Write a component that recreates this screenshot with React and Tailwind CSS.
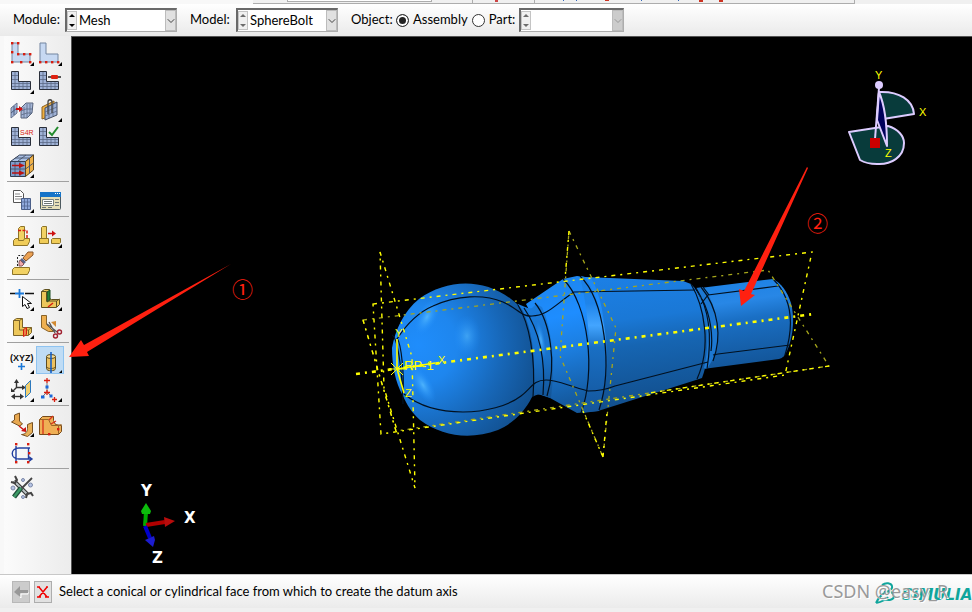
import { useState } from 'react';
import { ChevronDown } from 'lucide-react';

const TOOL_GROUPS = [
  [
    { label: 'Seed part', icon: SeedPartIcon, more: true },
    { label: 'Seed edges', icon: SeedEdgesIcon, more: true },
    { label: 'Mesh part', icon: MeshL, more: true },
    { label: 'Edit mesh', icon: EditMeshIcon },
    { label: 'Copy mesh pattern', icon: CopyMeshIcon },
    { label: 'Associate mesh', icon: AssociateIcon, more: true },
    { label: 'Element type', icon: ElementTypeIcon },
    { label: 'Verify mesh', icon: VerifyIcon },
    { label: 'Stack direction', icon: StackIcon, more: true },
  ],
  [
    { label: 'Mesh part copy', icon: PartCopyIcon, more: true },
    { label: 'Mesh manager', icon: ManagerIcon },
  ],
  [
    { label: 'Offset faces', icon: OffsetIcon, more: true },
    { label: 'Replace faces', icon: ReplaceIcon, more: true },
    { label: 'Remove faces', icon: EraseIcon },
  ],
  [
    { label: 'Partition edge', icon: PartitionEdgeIcon, more: true },
    { label: 'Partition face', icon: PartitionFaceIcon, more: true },
    { label: 'Partition cell', icon: PartitionCellIcon, more: true },
    { label: 'Cut geometry', icon: CutIcon },
  ],
  [
    { label: 'Datum point', icon: DatumPointIcon, more: true },
    { label: 'Datum axis', icon: DatumAxisIcon, more: true },
    { label: 'Datum plane', icon: DatumPlaneIcon, more: true },
    { label: 'Datum coordinates', icon: DatumCsysIcon, more: true },
  ],
  [
    { label: 'Virtual topology', icon: TopologyIcon, more: true },
    { label: 'Combine faces', icon: CombineIcon },
    { label: 'Restore entities', icon: RestoreIcon },
  ],
  [{ label: 'Tools', icon: ToolsIcon }],
];

export default function App() {
  const [active, setActive] = useState('Datum axis');

  return (
    <div className="flex h-screen flex-col overflow-hidden bg-[#f0f0f0] font-['Lato','Noto_Sans_CJK_SC',sans-serif] text-[13px] text-black">
      <TopStrip />
      <ContextBar />
      <main className="flex min-h-0 flex-1">
        <Toolbox active={active} onPick={setActive} />
        <section className="min-w-0 flex-1 border-t border-l border-[#555] bg-black">
          <Viewport />
        </section>
      </main>
      <PromptBar />
    </div>
  );
}

function TopStrip() {
  return (
    <div className="flex h-1 shrink-0 bg-[#f0f0f0]">
      <div className="w-[253px] bg-[#f8f8f8]" />
      <div className="flex w-[602px] border-r border-b border-[#adadad]">
        <div className="ml-[34px] h-[2px] w-[145px] border-x border-b border-[#adadad] bg-white" />
        <div className="ml-10 w-px bg-[#adadad]" />
        <div className="ml-[22px] h-[2px] w-[3px] bg-[#cc4444]" />
        <div className="ml-9 w-px bg-[#adadad]" />
        <div className="ml-7 h-px w-px bg-[#3366bb]" />
        <div className="ml-3 h-px w-px bg-[#3366bb]" />
        <div className="ml-7 h-px w-1 bg-[#cc3322]" />
        <div className="ml-8 h-px w-px bg-[#3366bb]" />
        <div className="ml-9 h-px w-px bg-[#3366bb]" />
        <div className="ml-5 h-[2px] w-1 bg-[#cc3322]" />
        <div className="ml-4 h-[2px] w-1 bg-[#cc3322]" />
      </div>
    </div>
  );
}

function ContextBar() {
  const [scope, setScope] = useState('assembly');
  return (
    <header className="flex h-8 shrink-0 items-center bg-linear-to-b from-white to-[#eaeaea] pl-[13px]">
      <label htmlFor="module" className="w-[52px]">Module:</label>
      <Combo id="module" options={['Mesh']} width="w-28" />
      <label htmlFor="model" className="ml-[13px] w-[46px]">Model:</label>
      <Combo id="model" options={['SphereBolt']} width="w-[102px]" dimSpin />
      <fieldset className="ml-[13px] flex items-center">
        <legend className="float-left w-[45px]">Object:</legend>
        <Radio id="assembly" label="Assembly" checked={scope === 'assembly'} onChange={setScope} />
        <Radio id="part" label="Part:" checked={scope === 'part'} onChange={setScope} />
      </fieldset>
      <div>
        <Combo id="part-name" label="Part name" options={['']} width="w-[105px]" dimSpin disabled />
      </div>
    </header>
  );
}

function Combo({ id, label, options, width, dimSpin, disabled }) {
  return (
    <div className={`${width} flex h-6 border border-t-2 border-l-2 border-[#adadad] border-t-[#696969] border-l-[#696969] bg-white`}>
      <div className={`${dimSpin ? 'text-[#6d6d6d]' : 'text-black'} my-px flex w-[10px] shrink-0 flex-col border border-[#c4c4c4] bg-[#f0f0f0]`}>
        <Spin d="M1 5h6L4 2z" name="Previous" disabled={disabled} />
        <Spin d="M1 3h6L4 6z" name="Next" disabled={disabled} />
      </div>
      <div className="relative min-w-0 flex-1">
        <select id={id} aria-label={label} disabled={disabled} className="h-full w-full appearance-none bg-transparent pl-[2px] outline-none">
          {options.map((o) => (
            <option key={o}>{o}</option>
          ))}
        </select>
        <span
          className={`${disabled ? 'bg-[#cccccc] text-[#9a9a9a]' : 'bg-[#e1e1e1] text-[#444]'} pointer-events-none absolute inset-y-0 right-0 flex w-[11px] items-center justify-center border border-[#bcbcbc]`}
        >
          <ChevronDown size={12} strokeWidth={2} className="shrink-0" />
        </span>
      </div>
    </div>
  );
}

function Spin({ d, name, disabled }) {
  return (
    <button aria-label={name} disabled={disabled} className="flex flex-1 items-center justify-center">
      <svg width="8" height="8" viewBox="0 0 8 8" className="shrink-0">
        <path d={d} fill="currentColor" />
      </svg>
    </button>
  );
}

function Radio({ id, label, checked, onChange }) {
  return (
    <div className="flex items-center">
      <input
        type="radio"
        name="scope"
        id={id}
        checked={checked}
        onChange={() => onChange(id)}
        className="size-[13px] appearance-none rounded-full border border-[#333] bg-white checked:bg-[#222] checked:shadow-[inset_0_0_0_2px_white]"
      />
      <label htmlFor={id} className="mr-1 ml-1">{label}</label>
    </div>
  );
}

function Toolbox({ active, onPick }) {
  return (
    <nav className="w-[71px] shrink-0 border-l-4 border-[#f8f8f8] bg-linear-to-r from-[#fbfbfb] to-[#ececec] pt-[2px] pr-[2px] pl-[3px]">
      {TOOL_GROUPS.map((tools, i) => (
        <div key={i} className="border-b border-[#a0a0a0] py-[3px] pl-px first:pt-0 last:border-b-0">
          <div className="flex flex-wrap">
            {tools.map(({ label, icon: Icon, more }) => (
              <button
                key={label}
                aria-label={label}
                onClick={() => onPick(label)}
                className={`size-7 ${active === label ? 'bg-[#bfdcf5] outline outline-offset-[-1px] outline-[#8ec3f0]' : ''}`}
              >
                <svg width="28" height="28" viewBox="0 0 28 28">
                  <Icon />
                  {more && <path d="M26 24v4h-4z" fill="#000" />}
                </svg>
              </button>
            ))}
          </div>
        </div>
      ))}
    </nav>
  );
}

function PromptBar() {
  return (
    <footer className="mb-1 flex h-[34px] shrink-0 items-center border-t border-[#c8c8c8] bg-linear-to-b from-white to-[#ebebeb] pl-3">
      <button aria-label="Go back" className="flex h-[22px] w-[18px] items-center justify-center border border-[#b8b8b8] bg-[#cccccc]">
        <svg width="16" height="16" viewBox="0 0 16 16">
          <path d="M3 9l5 5v-4h7V8" fill="none" stroke="#fff" />
          <path d="M1 8l6-6v4h8v3H7v4z" fill="#989898" />
        </svg>
      </button>
      <button aria-label="Cancel" className="ml-1 flex h-[22px] w-[18px] items-center justify-center border border-[#adadad] bg-[#e1e1e1]">
        <svg width="14" height="14" viewBox="0 0 14 14" className="shrink-0">
          <path d="M3 2l8 10M11 2L3 12M1 12h4M9 12h4M1 2h3M10 2h2" fill="none" stroke="#f00000" strokeWidth="1.5" />
        </svg>
      </button>
      <p className="ml-[7px] whitespace-nowrap">Select a conical or cylindrical face from which to create the datum axis</p>
      <div className="relative ml-auto flex h-full w-[150px] shrink-0 items-center overflow-hidden">
        <span className="absolute top-[5px] left-[52px] flex items-center text-[#10a59c]">
          <svg width="24" height="24" viewBox="0 0 24 24" fill="none" stroke="currentColor" strokeWidth="2" className="shrink-0">
            <path d="M8 4c4-3 9-2 10 1s-3 5-6 6M10 11c5-1 10 0 10 4s-6 5-9 3M2 22c3-6 6-9 10-11M2 22c5-1 9-2 12-6" />
          </svg>
          <b className="mt-1 ml-1 font-['DejaVu_Sans',sans-serif] text-[15px] whitespace-nowrap italic">SIMULIA</b>
        </span>
        <span className="relative font-['Noto_Sans',sans-serif] text-[18px] whitespace-nowrap text-[#999999] [text-shadow:1px_1px_0_white]">
          CSDN @easy_R
        </span>
      </div>
    </footer>
  );
}

function Viewport() {
  return (
    <svg viewBox="72 37 900 537" className="pointer-events-none block h-full w-full overflow-visible" role="img" aria-label="Sphere bolt assembly">
      <defs>
        <radialGradient id="ball" gradientUnits="userSpaceOnUse" cx="418" cy="345" r="130">
          <stop offset="0" stopColor="#1f8dfc" />
          <stop offset=".3" stopColor="#1e86ee" />
          <stop offset=".65" stopColor="#1767b8" />
          <stop offset="1" stopColor="#114c88" />
        </radialGradient>
        <linearGradient id="cone" x1="0" y1="0" x2=".15" y2="1">
          <stop offset="0" stopColor="#1e84ea" />
          <stop offset=".35" stopColor="#1e8dff" />
          <stop offset=".6" stopColor="#1c7edf" />
          <stop offset="1" stopColor="#14589c" />
        </linearGradient>
        <linearGradient id="neck" x1="0" y1="0" x2="0" y2="1">
          <stop offset="0" stopColor="#1b7bdc" />
          <stop offset=".5" stopColor="#1973cc" />
          <stop offset="1" stopColor="#124f8d" />
        </linearGradient>
        <linearGradient id="body" x1="0" y1="0" x2=".12" y2="1">
          <stop offset="0" stopColor="#1c80e6" />
          <stop offset=".35" stopColor="#1a78d6" />
          <stop offset=".55" stopColor="#1665b2" />
          <stop offset="1" stopColor="#124f8d" />
        </linearGradient>
        <linearGradient id="shaft" x1="0" y1="0" x2=".15" y2="1">
          <stop offset="0" stopColor="#1a80e4" />
          <stop offset=".3" stopColor="#2887e6" />
          <stop offset=".5" stopColor="#1a6fc4" />
          <stop offset="1" stopColor="#13569a" />
        </linearGradient>
        <linearGradient id="band" x1="0" y1="0" x2="0" y2="1">
          <stop offset="0" stopColor="#1c7fe4" />
          <stop offset=".2" stopColor="#1e84ea" />
          <stop offset=".36" stopColor="#43a5ff" />
          <stop offset=".52" stopColor="#196fc4" />
          <stop offset="1" stopColor="#14559a" />
        </linearGradient>
        <radialGradient id="shine">
          <stop offset="0" stopColor="#55baff" stopOpacity=".85" />
          <stop offset="1" stopColor="#1e8dff" stopOpacity="0" />
        </radialGradient>
      </defs>

      {/* bolt */}
      <path d="M700 288l73-9c8 4 14 12 18 24 4 16 2 34-4 48-2 4-4 7-8 8l-76 10z" fill="url(#shaft)" />
      <path d="M585 277l98 4 8 3c8 8 15 24 17 40 2 20-1 41-6 54l-6 2-98 31z" fill="url(#body)" />
      <path d="M563 279l14-3 8 1 6 1c12 20 18 60 13 102l-6 31-21 2-27-15-12-4c6-30 2-66-12-90z" fill="url(#cone)" />
      <path d="M580 276l5 1c18 26 32 82 14 134l-17 2c12-44 8-92-2-137z" fill="url(#band)" />
      <path d="M518 304c8 3 10 5 14 4l4-4 6 3c10 22 14 58 9 91l-9-3c-4-1-6 0-10 2l-17 8z" fill="url(#neck)" />
      <path d="M392 348c3-18 12-37 27-49 28-20 64-21 92 0 5 4 9 7 12 12 12 26 13 60 9 86-8 16-20 27-34 33-27 10-55 7-78-10-8-7-13-15-17-24-8-14-11-32-11-48z" fill="url(#ball)" />
      <ellipse cx="427" cy="317" rx="10" ry="20" fill="url(#shine)" transform="rotate(28 427 317)" />
      <ellipse cx="467" cy="336" rx="14" ry="21" fill="url(#shine)" opacity=".7" />
      <ellipse cx="423" cy="385" rx="9" ry="21" fill="url(#shine)" transform="rotate(-30 423 385)" />
      <ellipse cx="541" cy="340" rx="4" ry="19" fill="url(#shine)" transform="rotate(-10 541 340)" />
      <path d="M696 288l7-1 6 8c9 20 11 45 7 59l-9 15-3-1c5-20 6-54-8-80z" fill="#1d78d2" />

      <g fill="none" stroke="#02101f" strokeWidth="1.2">
        <path d="M397 339c9-14 22-27 36-33 24-11 51-12 70-4 14 6 19 15 29 14 15 0 24-12 42-24l121-2" />
        <path d="M404 394c15 12 34 18 59 18 22 0 45-6 58-16 10-7 12-16 25-16 12 0 22 6 42 11 8 0 17-1 27-5l93-24" />
        <path d="M392 335c5 2 10 30 11 69M397 338c5 7 7 40 6 54" />
        <path d="M518 305c11 18 18 52 15 92M524 308c15 22 22 50 19 87M535 303c15 18 22 60 12 93" />
        <path d="M563 279c26 25 33 94 18 134M580 276c25 24 33 92 19 134" />
        <path d="M691 284c13 22 21 62 6 95M696 288c14 22 16 50 11 81M701 287c18 22 21 50 12 74" />
        <path d="M701 304l7-9 70-9M713 355l5-1 72-9M703 287l6 8M702 299c9 17 11 38 9 52M773 279c18 18 22 44 12 76" />
      </g>

      {/* datum planes */}
      <g fill="none" stroke="#a6a61b" strokeWidth="1.3" strokeDasharray="4 5 2 5">
        <path d="M363 320l405-50 61 96-433 65z" />
        <path d="M569 231l47 97-13 129-43-101z" />
      </g>
      <g fill="none" stroke="#ffff00" strokeWidth="1.4" strokeDasharray="4 5 2 5">
        <path d="M373 304l439-52-27 123-404 59z" />
        <path d="M380 252l32 105 3 131-31-100z" />
        <path d="M363 320l33 111M829 366l-180 27M569 231l-4 48M603 457l-20-46M603 457l4-45" />
      </g>
      <path d="M356 374l458-60" stroke="#ffff00" strokeWidth="2.6" strokeDasharray="4 5 2 5" />

      <g stroke="#ffff00" fill="none">
        <path d="M397 339v30l7 24" strokeWidth="1.6" />
        <path d="M397 369l38-6" strokeWidth="1.6" />
        <path d="M391 363l12 12M391 375l12-12M389 369h16" />
      </g>
      <g fill="#ffff00" fontFamily="Liberation Sans, sans-serif" fontSize="11">
        <text x="404" y="370" fontSize="13">RP-1</text>
        <text x="438" y="364">X</text>
        <text x="395" y="337">Y</text>
        <text x="405" y="397">Z</text>
        <text x="875" y="79">Y</text>
        <text x="919" y="116">X</text>
      </g>

      {/* view compass */}
      <g stroke="#ddccff" strokeWidth="2" strokeLinejoin="round">
        <path d="M879 92c20-1 34 8 35 22l-37 6z" fill="#083b3b" />
        <path d="M849 132l39-6c10 3 16 10 16 17 0 14-13 22-27 21-6 0-12-1-17-4z" fill="#083b3b" />
        <path d="M879 92c6 14 8 34 8 54l-10-26z" fill="#00005a" />
        <path d="M879 88l-4 51" fill="none" />
      </g>
      <circle cx="879" cy="85" r="4" fill="#ddccff" />
      <path d="M870 138h10v10h-10z" fill="#cc0000" />
      <text x="885" y="157" fill="#ffff00" fontFamily="Liberation Sans, sans-serif" fontSize="11">Z</text>

      {/* axis triad */}
      <path d="M145 526l1-14" stroke="#00aa00" strokeWidth="4" />
      <path d="M146 503l5 8-1 3h-8l-1-3z" fill="#0cbc0c" />
      <path d="M146 525l19-3" stroke="#b00000" strokeWidth="4" />
      <path d="M164 517l11 4-10 6z" fill="#b80c0c" />
      <path d="M145 526l5 12" stroke="#0000cc" strokeWidth="4" />
      <path d="M145 540l9-4 1 4-2 7z" fill="#1c1cd0" />
      <g fill="#fff" fontFamily="DejaVu Sans, sans-serif" fontWeight="bold" fontSize="15">
        <text x="141" y="496">Y</text>
        <text x="184" y="523">X</text>
        <text x="152" y="563">Z</text>
      </g>

      {/* notes */}
      <g fill="#ff2010">
        <path d="M231 264l-144 88 2 4-20 1 12-17 3 5z" />
        <path d="M807 167l1 1-57 126 4 1-14 11-2-17 5 2z" />
        <g fontFamily="Noto Sans CJK SC, sans-serif" fontSize="21">
          <text x="232" y="297">①</text>
          <text x="807" y="231">②</text>
        </g>
      </g>
    </svg>
  );
}

/* toolbox icons, all on a 28px grid */

function Dots({ points }) {
  return points.map(([x, y]) => <rect key={`${x}-${y}`} x={x - 1} y={y - 1} width="2.4" height="2.4" fill="#d81e10" />);
}

function PlainL() {
  return <path d="M4 5h6v11h12v8H4z" fill="#c6d8f2" stroke="#7385a0" />;
}

function SeedPartIcon() {
  return (
    <>
      <PlainL />
      <Dots points={[[4, 5], [10, 5], [4, 14], [10, 16], [16, 16], [22, 16], [4, 24], [13, 24], [22, 24]]} />
    </>
  );
}

function SeedEdgesIcon() {
  return (
    <>
      <PlainL />
      <Dots points={[[4, 24], [10, 24], [16, 24], [22, 24]]} />
    </>
  );
}

function MeshL() {
  return (
    <>
      <path d="M3.5 5.5h7v10h12v8h-19z" fill="#9fb2d6" stroke="#2a2f3a" />
      <path d="M7 6v17M4 9.5h6M4 13.5h6M4 17.5h18M4 20.5h18M11 16v7M15 16v7M19 16v7" stroke="#5c6a86" strokeWidth=".8" />
    </>
  );
}

function EditMeshIcon() {
  return (
    <>
      <MeshL />
      <path d="M12 11h13" stroke="#222" strokeWidth="1.5" />
      <rect x="15" y="9" width="7" height="4" rx="1" fill="#dd2211" />
    </>
  );
}

function CopyMeshIcon() {
  return (
    <>
      <path d="M3 14l6-5v10l-6 5z" fill="#9fb2d6" stroke="#66728c" />
      <path d="M3 19l6-5M6 12v9" stroke="#4d5b78" />
      <path d="M13 14l5-5h7l-1 10-5 5h-6z" fill="#a6b7d8" stroke="#58647c" />
      <path d="M13 17l5-2h7M13 21l6-2h5M16 13v11M19 10v14M22 10v11" stroke="#5c6a86" fill="none" strokeWidth=".8" />
      <path d="M8 15h4" stroke="#cc1111" strokeWidth="2" />
      <path d="M11 12l4 3-4 3z" fill="#cc1111" />
    </>
  );
}

function AssociateIcon() {
  return (
    <>
      <path d="M6 13l12-6v14L6 25z" fill="#f0b040" stroke="#8a6020" />
      <path d="M9 14l12-6v13L9 26z" fill="#9fb2d6" stroke="#444e62" />
      <path d="M9 18l12-5M9 22l12-5M13 12v12M17 10v12" stroke="#5c6a86" strokeWidth=".8" />
      <path d="M12 20V8c0-3 4-3 4 0v11" fill="none" stroke="#444" strokeWidth="1.3" />
    </>
  );
}

function ElementTypeIcon() {
  return (
    <>
      <MeshL />
      <text x="12" y="13" fontSize="7" fontFamily="Liberation Sans, sans-serif" fill="#d81e10">S4R</text>
    </>
  );
}

function VerifyIcon() {
  return (
    <>
      <MeshL />
      <path d="M13 10l3 3 6-8" fill="none" stroke="#228b2c" strokeWidth="2" />
    </>
  );
}

function StackIcon() {
  return (
    <>
      <path d="M2.5 11.5h15v15h-15z" fill="#7f9dcc" stroke="#333f55" />
      <path d="M2.5 11.5l9-6.5h14l-8 6.5z" fill="#aac0e4" stroke="#333f55" />
      <path d="M17.5 11.5l8-6.5v15l-8 6.5z" fill="#eeb14a" stroke="#5a4520" />
      <path d="M7 12v14M12 12v14M3 19h14M7 8h14M10 11l8-6M17.5 19l8-6M21.5 8v15" stroke="#46536b" strokeWidth=".9" />
      <path d="M4 15.5h8M4 23h8" stroke="#bb1111" strokeWidth="1.5" />
      <path d="M11 13l6 2.5-6 2.5zM11 20.5l6 2.5-6 2.5z" fill="#bb1111" />
    </>
  );
}

function PartCopyIcon() {
  return (
    <>
      <path d="M5.5 5.5h7l3 3v9h-10z" fill="#fff" stroke="#555" />
      <path d="M7 9h5M7 11.5h7M7 14h7" stroke="#888" />
      <path d="M13.5 13.5h9v11h-9z" fill="#8fa9dc" stroke="#4b5f88" />
      <path d="M14 17h9M14 21h9M16.5 14v10M19.5 14v10" stroke="#50658f" strokeWidth=".8" />
    </>
  );
}

function ManagerIcon() {
  return (
    <>
      <rect x="4.5" y="7.5" width="20" height="17" rx="1" fill="#e6dfb8" stroke="#4d5a60" />
      <path d="M4 7h21v5H4z" fill="#1674c8" />
      <path d="M19 8.5h1M21 8.5h1M23 8.5h1" stroke="#fff" />
      <path d="M6.5 14.5h11v6h-11z" fill="#fff" stroke="#7c8480" />
      <path d="M8 16.5h8M8 18.5h8M19 14.5h4M19 17.5h4M19 20.5h4M6 22.5h4M12 22.5h4" stroke="#6e7674" />
    </>
  );
}

function OffsetIcon() {
  return (
    <>
      <path d="M5.5 20.5l2-2h14v3l-2 4h-14z" fill="#f0cc58" stroke="#8d7428" />
      <path d="M10.5 8.5l2-2h4v12l-1 2h-5z" fill="#f2d264" stroke="#8d7428" />
      <path d="M10 10.5h9v8" fill="none" stroke="#d81e10" strokeWidth="1.5" strokeDasharray="3 1.5" />
    </>
  );
}

function ReplaceIcon() {
  return (
    <>
      <path d="M5.5 7.5l1-1h4v12h-5z" fill="#f2d264" stroke="#8d7428" />
      <path d="M3.5 18.5h9v5h-9zM15.5 19.5l1-1h8v4l-1 1h-8z" fill="#f0cc58" stroke="#8d7428" />
      <path d="M12 13.5h5" stroke="#cc1111" strokeWidth="1.5" />
      <path d="M16 10.5l4 3-4 3z" fill="#cc1111" />
    </>
  );
}

function EraseIcon() {
  return (
    <>
      <path d="M4.5 21.5l2-2h15v3l-2 4h-15z" fill="#f2d264" stroke="#8d7428" />
      <path d="M9.5 18V8.5l1-1h7" fill="none" stroke="#222" strokeDasharray="2 1.5" />
      <path d="M15 10l5-6h5v3l-7 6z" fill="#eba254" stroke="#88562a" />
      <path d="M14 10l4 4-2 2-4-4z" fill="#5c6488" />
      <path d="M12 12l4 4-2 2h-3v-4z" fill="#eea8aa" stroke="#885858" />
    </>
  );
}

function PartitionEdgeIcon() {
  return (
    <>
      <path d="M2 10.5h5M17 10.5h9" stroke="#111" strokeWidth="1.3" />
      <path d="M11.5 6v9M7 10.5h9" stroke="#1b78d8" strokeWidth="1.8" />
      <path d="M14.5 13.5v10l2.5-2 2 4 2.500-1-2-4h4z" fill="#fff" stroke="#111" />
    </>
  );
}

function PartitionFaceIcon() {
  return (
    <>
      <path d="M5.5 8.5l3-2h5v9l2 1h8v5l-3 3h-15z" fill="#edc75a" stroke="#5e5020" />
      <path d="M11 9l3-2v10l-3 2z" fill="#278038" stroke="#1b4c22" />
      <path d="M5.5 8.5h5V18h10l3-2M20.5 18v6" fill="none" stroke="#5e5020" />
      <path d="M12 24l5-4" stroke="#d81e10" strokeWidth="1.5" />
    </>
  );
}

function PartitionCellIcon() {
  return (
    <>
      <path d="M5.5 9.5l3-2h6v9h9v5l-3 3h-15z" fill="#edc75a" stroke="#7b6328" />
      <path d="M5.5 9.5h6V19h9l3-2.5M11.5 9.5l3-2M20.5 19v5" fill="none" stroke="#7b6328" />
      <path d="M15.5 18.5l3-2v7l-3 2z" fill="#e88446" stroke="#d81e10" />
    </>
  );
}

function CutIcon() {
  return (
    <>
      <path d="M5.5 4.5h5v9l7 7h-5l-7-4z" fill="#efb050" stroke="#8a6328" />
      <path d="M15 11l5-1v6z" fill="#d28a32" />
      <path d="M11 13l10 8M13 11l6 11" stroke="#555" strokeWidth="1.3" />
      <g fill="none" stroke="#a02030" strokeWidth="1.4">
        <circle cx="23.5" cy="21" r="2" />
        <circle cx="19.5" cy="25" r="2" />
      </g>
    </>
  );
}

function DatumPointIcon() {
  return (
    <>
      <text x="2" y="15" fontSize="9" fontWeight="bold" fontFamily="Liberation Sans, sans-serif" fill="#111">(XYZ)</text>
      <path d="M13.5 17v7M10 20.5h7" stroke="#1b78d8" strokeWidth="1.6" />
    </>
  );
}

function DatumAxisIcon() {
  return (
    <>
      <path d="M10.5 10.5v12c0 3 9 3 9 0v-12" fill="#edc260" stroke="#5e4c20" />
      <ellipse cx="15" cy="10.5" rx="4.5" ry="2" fill="#f5dc94" stroke="#5e4c20" />
      <path d="M10.5 21c1 2 8 2 9 0" fill="none" stroke="#5e4c20" />
      <path d="M15 6v21" stroke="#1560c8" strokeWidth="1.6" />
    </>
  );
}

function DatumPlaneIcon() {
  return (
    <>
      <path d="M8.5 8v5.5H15M8.5 13.5L5 17" fill="none" stroke="#333" strokeWidth="1.4" />
      <path d="M6 9l2.5-4L11 9zM14 11l4 2.5-4 2.5zM3 18v-4l4 4z" fill="#333" />
      <path d="M5 22.5h9" stroke="#333" strokeWidth="1.4" />
      <path d="M3 22.5l4-3v6zM16 22.5l-4-3v6z" fill="#333" />
      <path d="M17.5 11.5l5-5v12l-5 5z" fill="#f0cf70" stroke="#2d79bd" />
    </>
  );
}

function DatumCsysIcon() {
  return (
    <>
      <path d="M11 9v9M10 19l-4 4M12 19l3 3" stroke="#777" />
      <path d="M8 6.5h6M11 4v5M8 18.5h6M11 16v5M16 25.5h5M18.5 23v5" stroke="#d81e10" strokeWidth="1.3" />
      <path d="M9.5 11.5h3v3h-3zM5 21.5h3.500v3H5zM13.5 20.5h3v3h-3z" fill="#1b68d8" />
    </>
  );
}

function TopologyIcon() {
  return (
    <>
      <path d="M6.5 6l5-2v8l3 3-3 2-8-4 3-2z" fill="#e8a850" stroke="#775022" />
      <path d="M11 17l5 4" stroke="#cc1111" strokeWidth="1.5" />
      <path d="M18 18v5l-5-1z" fill="#cc1111" />
      <path d="M19.5 15.5l5-2v10l-5 4-6-2c4 0 6-3 6-6z" fill="#e8b058" stroke="#775022" />
    </>
  );
}

function CombineIcon() {
  return (
    <>
      <path d="M3.5 10.5l3-3h11v4l2 4 6 1v6l-3 3h-19z" fill="#efaf55" stroke="#774c1c" />
      <path d="M3.5 10.5h9l3 6h7l3-1M22.5 16.5v9" fill="none" stroke="#9a6526" />
      <path d="M7 11v14M13 11l4-4M15 15l5-3" stroke="#d8301c" strokeWidth="1.3" />
      <Dots points={[[13, 25], [22, 20]]} />
    </>
  );
}

function RestoreIcon() {
  return (
    <>
      <path d="M22 11H11c-9 0-9 11 0 11h12M20 19l4 3-4 3M20.5 11v11M8 9v15" fill="none" stroke="#2340a0" strokeWidth="1.4" />
      <Dots points={[[8, 7], [20, 7], [21, 16], [8, 25], [20, 25]]} />
    </>
  );
}

function ToolsIcon() {
  return (
    <>
      <g fill="#b7c4e4" stroke="#7b88a8">
        <circle cx="15" cy="8" r="1.5" />
        <circle cx="22.5" cy="13" r="2" />
        <circle cx="5" cy="16" r="2" />
        <circle cx="15" cy="25" r="1.5" />
      </g>
      <path d="M6 9l14 14" stroke="#333" strokeWidth="4" />
      <path d="M6 9l14 14" stroke="#b9c2c4" strokeWidth="2" />
      <path d="M3 10l4 1 2-3-2-4M18 26l1-4 4-1 2 3" fill="none" stroke="#444" strokeWidth="2" />
      <path d="M24 6L13 17" stroke="#444" strokeWidth="1.8" />
      <path d="M13 16l-7 9" stroke="#1e4c38" strokeWidth="5" />
      <path d="M13 16l-7 9" stroke="#3c9a66" strokeWidth="2.5" />
    </>
  );
}
